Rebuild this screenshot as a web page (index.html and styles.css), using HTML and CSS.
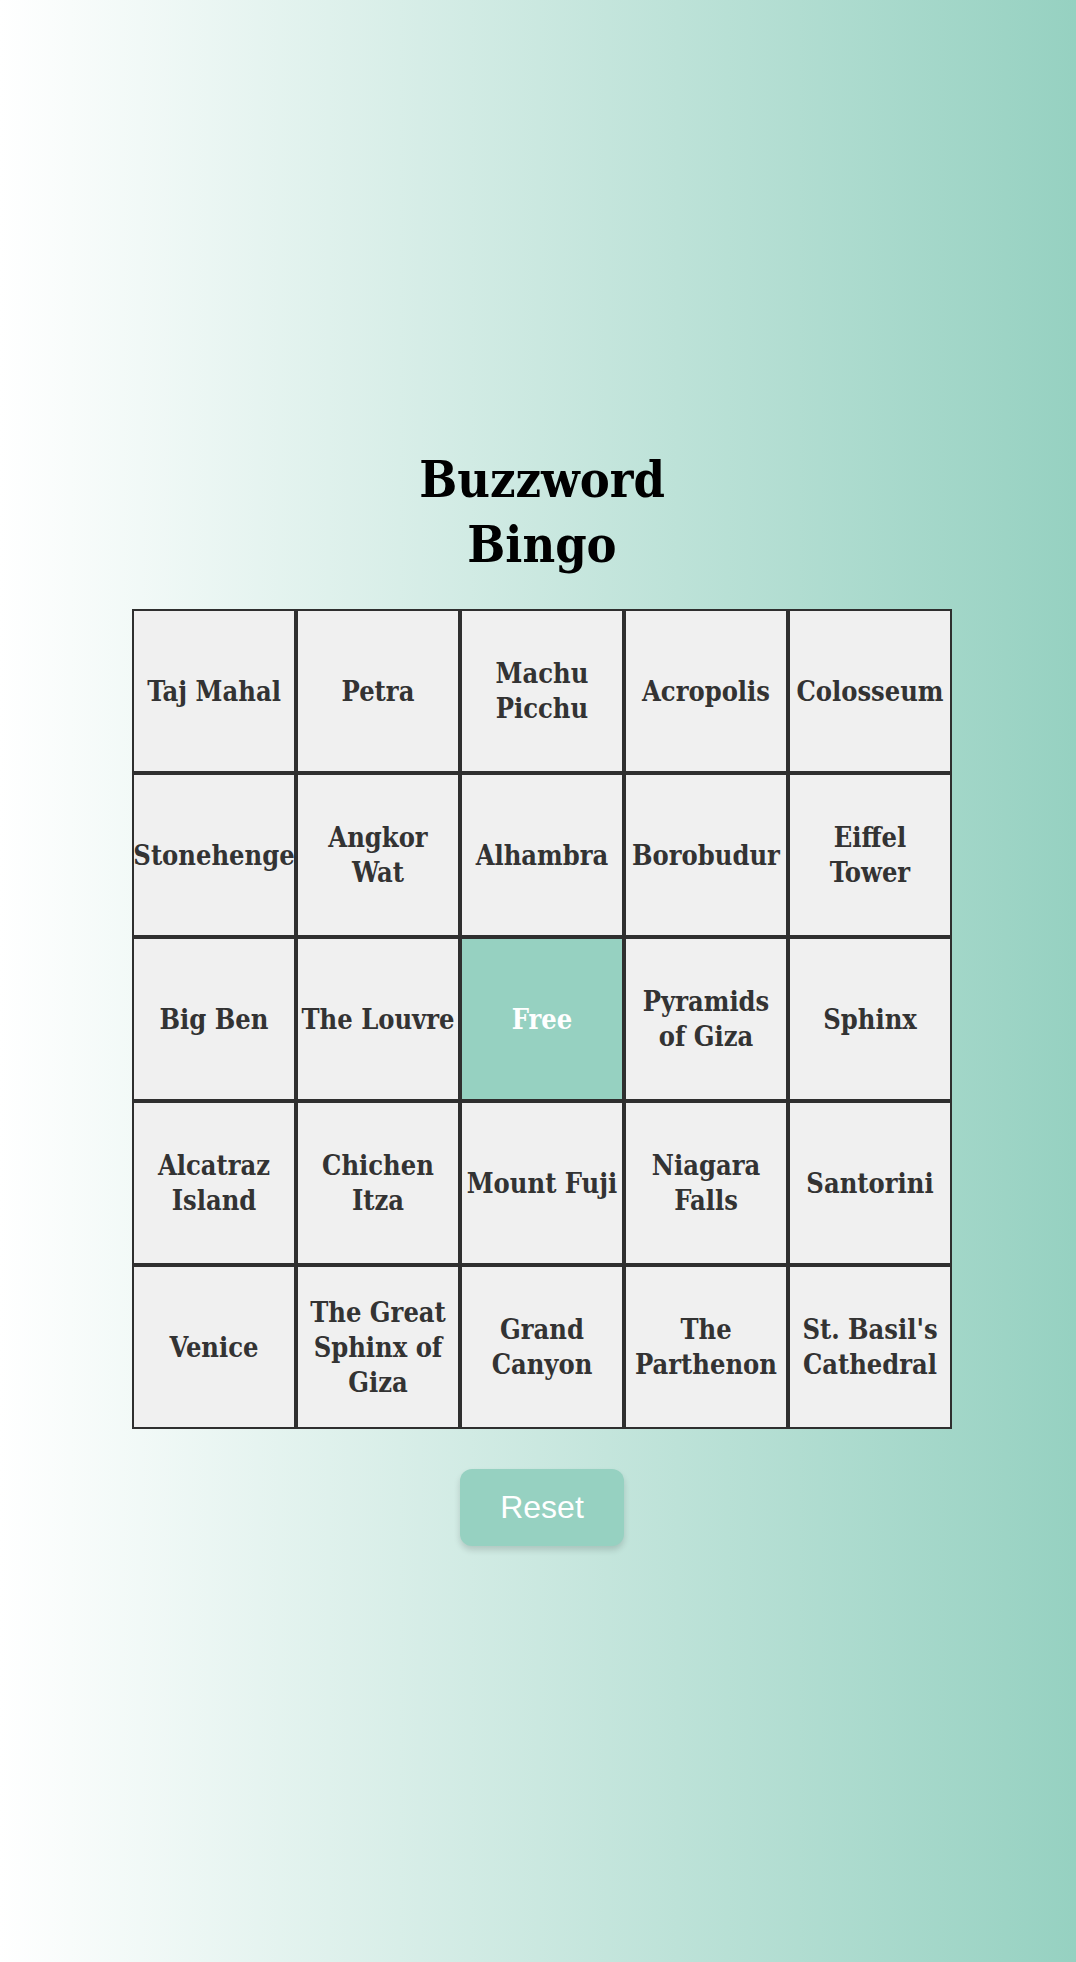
FILE: index.html
```html
<!DOCTYPE html>
<html lang="en">
<head>
<meta charset="utf-8">
<title>Buzzword Bingo</title>
<link rel="stylesheet" href="styles.css">
</head>
<body>
<main class="page">
  <h1 class="title">Buzzword<br>Bingo</h1>
  <div class="board">
    <div class="cell">Taj Mahal</div>
    <div class="cell">Petra</div>
    <div class="cell">Machu<br>Picchu</div>
    <div class="cell">Acropolis</div>
    <div class="cell">Colosseum</div>
    <div class="cell">Stonehenge</div>
    <div class="cell">Angkor<br>Wat</div>
    <div class="cell">Alhambra</div>
    <div class="cell">Borobudur</div>
    <div class="cell">Eiffel<br>Tower</div>
    <div class="cell">Big Ben</div>
    <div class="cell">The Louvre</div>
    <div class="cell cell-free">Free</div>
    <div class="cell">Pyramids<br>of Giza</div>
    <div class="cell">Sphinx</div>
    <div class="cell">Alcatraz<br>Island</div>
    <div class="cell">Chichen<br>Itza</div>
    <div class="cell">Mount Fuji</div>
    <div class="cell">Niagara<br>Falls</div>
    <div class="cell">Santorini</div>
    <div class="cell">Venice</div>
    <div class="cell">The Great<br>Sphinx of<br>Giza</div>
    <div class="cell">Grand<br>Canyon</div>
    <div class="cell">The<br>Parthenon</div>
    <div class="cell">St. Basil's<br>Cathedral</div>
  </div>
  <button class="reset" type="button">Reset</button>
</main>
</body>
</html>
```
FILE: styles.css
```css
html, body {
  margin: 0;
  padding: 0;
}

body {
  min-height: 1962px;
  background: linear-gradient(to right, #ffffff, #96d1c1);
}

.page {
  display: flex;
  flex-direction: column;
  align-items: center;
  padding: 447px 0 0 8px;
}

.title {
  margin: 0;
  font-family: "DejaVu Serif Condensed", "DejaVu Serif", serif;
  font-stretch: condensed;
  font-weight: bold;
  font-size: 50px;
  line-height: 65px;
  text-align: center;
  color: #000;
}

.board {
  margin-top: 32px;
  display: grid;
  grid-template-columns: repeat(5, 164px);
  grid-auto-rows: 164px;
}

.cell {
  box-sizing: border-box;
  border: 2px solid #2f2f2f;
  background: #f0f0f0;
  display: flex;
  align-items: center;
  justify-content: center;
  text-align: center;
  white-space: nowrap;
  font-family: "DejaVu Serif Condensed", "DejaVu Serif", serif;
  font-stretch: condensed;
  font-weight: bold;
  font-size: 27px;
  line-height: 35px;
  color: #333;
}

.cell-free {
  background: #96d1c1;
  color: #fff;
}

.reset {
  margin-top: 40px;
  width: 164px;
  height: 77px;
  border: none;
  border-radius: 12px;
  background: #96d1c1;
  color: #fff;
  font-family: "Liberation Sans", Arial, sans-serif;
  font-size: 32px;
  box-shadow: 0 4px 6px rgba(0, 0, 0, 0.15);
  cursor: pointer;
}
```
